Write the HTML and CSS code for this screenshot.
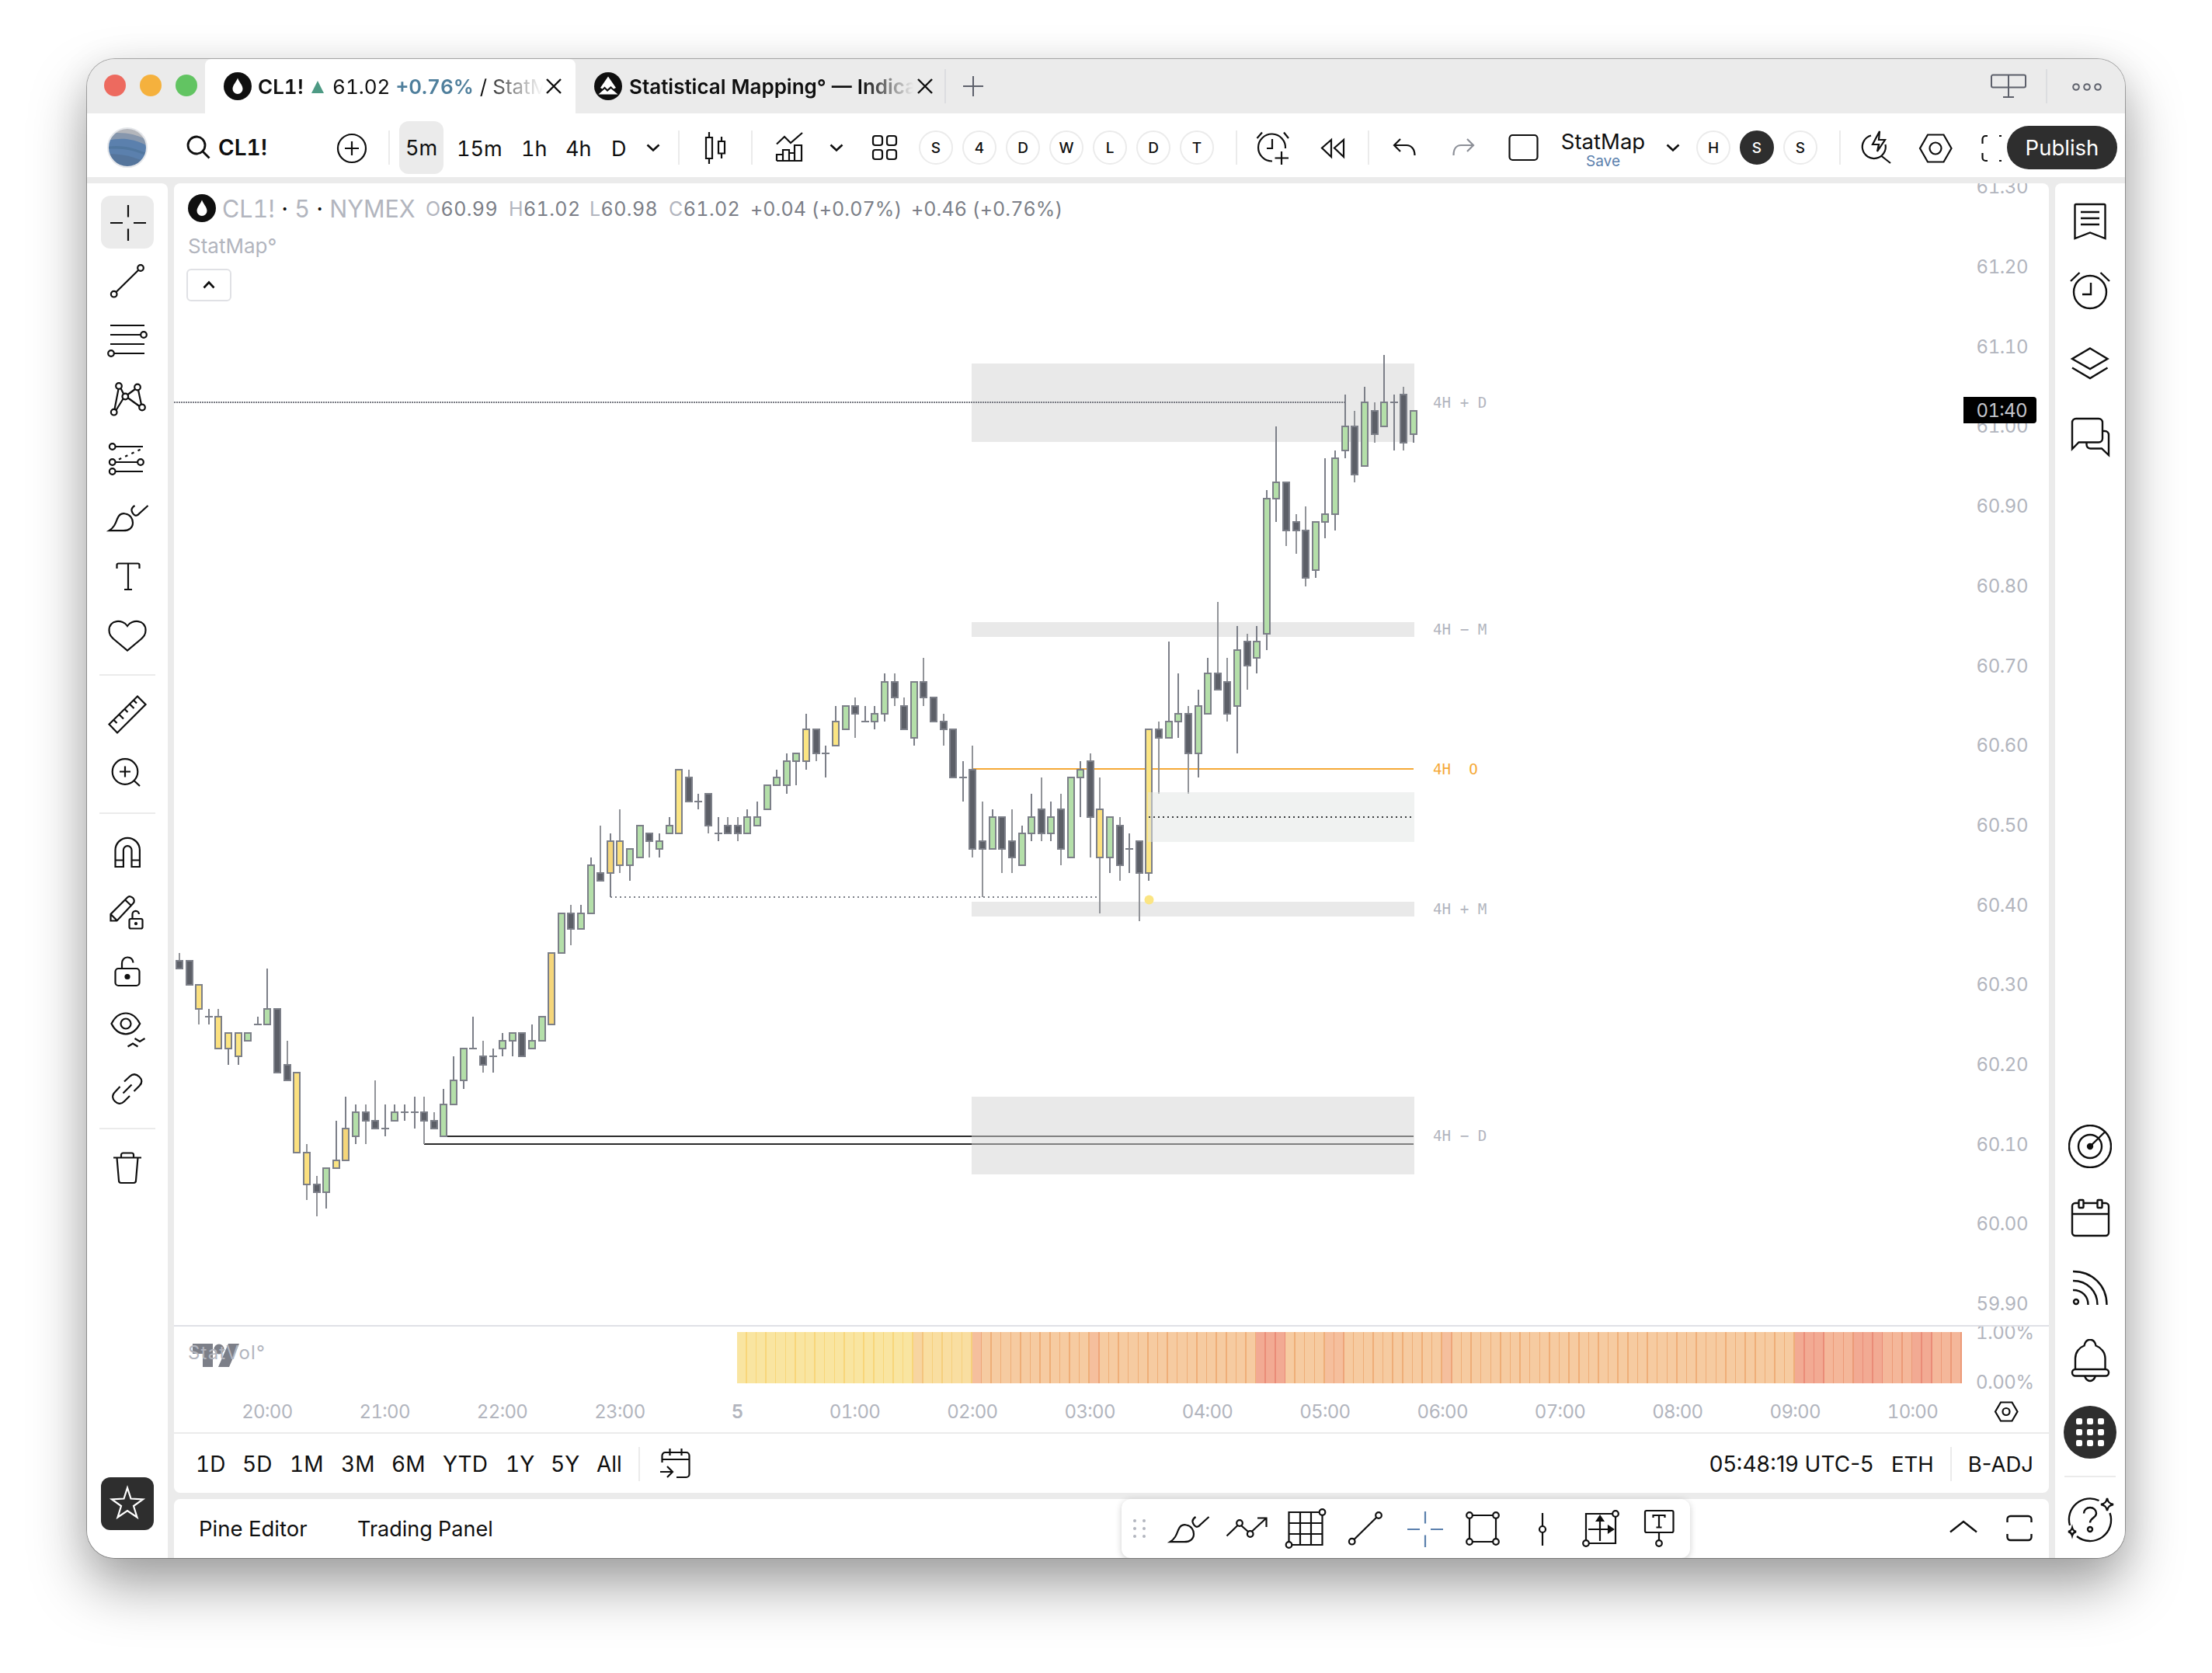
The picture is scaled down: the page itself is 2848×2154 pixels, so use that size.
FILE: index.html
```html
<!DOCTYPE html>
<html lang="en">
<head>
<meta charset="utf-8">
<title>CL1! 61.02 +0.76% / StatMap</title>
<link rel="stylesheet" href="styles.css">
</head>
<body>
<svg class="defs" width="0" height="0" aria-hidden="true">
  <defs>
    <symbol id="i-drop" viewBox="0 0 36 36"><circle cx="18" cy="18" r="18" fill="#0f0f0f"/><path d="M18 7.500C16 13 11.500 16.500 11.500 21.500a6.500 6.500 0 0 0 13 0C24.500 16.500 20 13 18 7.500z" fill="#fff"/></symbol>
    <symbol id="i-chev" viewBox="0 0 56 56"><path d="M20.500 24.500 28 31.500l7.500-7"/></symbol>
    <symbol id="i-close" viewBox="0 0 24 24"><path d="M3 3l18 18M21 3 3 21"/></symbol>
    <symbol id="i-cross" viewBox="0 0 56 56"><path d="M6 29h16M36 29h16M29 6v15.500M29 36.500V52"/></symbol>
    <symbol id="i-line" viewBox="0 0 56 56"><circle cx="10.700" cy="44.700" r="3.800"/><circle cx="45" cy="11" r="3.800"/><path d="M13.500 42 42.200 13.800"/></symbol>
    <symbol id="i-brush" viewBox="0 0 56 56"><path d="M4.500 45.200C11 41 12.500 36.500 15 30c2-5 6-7.500 10.500-6.500 6 1 9.500 6 9.500 11.500 0 6.500-5 10.200-12 10.200zM37.500 13c-3 2-4.500 4-4 6.500s3 6.300 5.500 6.300c2 0 3.500-1.500 4.500-2.800L54.500 13"/></symbol>
  </defs>
</svg>

<main class="window">
  <header class="tabs">
    <div class="lights"><i class="red"></i><i class="amber"></i><i class="green"></i></div>
    <div class="tab tab-on">
      <svg class="coin"><use href="#i-drop"/></svg>
      <div class="tab-title t1"><b>CL1!</b><svg class="tri" viewBox="0 0 16 16"><path d="M8 0l8 16H0z"/></svg><span class="px">61.02</span><span class="chg">+0.76%</span><span class="rest">/ StatMap</span></div>
      <svg class="x"><use href="#i-close"/></svg>
    </div>
    <div class="tab tab-off">
      <svg class="coin" viewBox="0 0 36 36"><circle cx="18" cy="18" r="18" fill="#0f0f0f"/><path d="M18 5.500 28 20l-3 1.500-3.500-3.500-4.500 4-3.500-3.500-3 3-2.500-1.500z" fill="#fff"/><path d="M5.500 28.500 13.500 21.500l3.500 3.500 4.500-4 9 7.500z" fill="#fff"/></svg>
      <div class="tab-title t2"><b>Statistical Mapping° — Indicator</b></div>
      <svg class="x"><use href="#i-close"/></svg>
    </div>
    <span class="tab-sep"></span>
    <svg class="tab-plus" viewBox="0 0 28 28"><path d="M14 1v26M1 14h26"/></svg>
    <svg class="tab-layout" viewBox="0 0 48 34"><path d="M2 4.500a2 2 0 0 1 2-2h40a2 2 0 0 1 2 2v12a2 2 0 0 1-2 2H4a2 2 0 0 1-2-2zM24 2.500v28M17 31h14"/></svg>
    <span class="tab-sep sep-r"></span>
    <svg class="tab-dots" viewBox="0 0 40 12"><circle cx="6" cy="6" r="3.800"/><circle cx="20" cy="6" r="3.800"/><circle cx="34" cy="6" r="3.800"/></svg>
  </header>

  <nav class="bar">
    <svg class="avatar" viewBox="0 0 52 52"><defs><clipPath id="av"><circle cx="26" cy="26" r="25"/></clipPath></defs><g clip-path="url(#av)"><rect width="52" height="52" fill="#5b80ad"/><path d="M0 0h52v17C38 9 20 6 0 10z" fill="#b4b6bb"/><path d="M0 8c18-3 38 0 52 9v7C34 14 18 13 0 17z" fill="#8797ad"/><path d="M0 25c20-3 36 2 52 9v3C34 29 18 26 0 28z" fill="#51779f"/><path d="M0 34c18 0 34 3 52 12v6H0z" fill="#55759c"/></g><circle cx="26" cy="26" r="25" fill="none" stroke="#e4e6ea" stroke-width="2"/></svg>
    <div class="search"><svg viewBox="0 0 32 32"><circle cx="13" cy="13" r="11"/><path d="M21 21l8.500 8.500"/></svg><b>CL1!</b></div>
    <svg class="ic" viewBox="0 0 56 56"><circle cx="28" cy="29" r="18"/><path d="M28 20v18M19 29h18"/></svg>
    <span class="sep"></span>
    <span class="tf tf-on">5m</span>
    <span class="tf">15m</span>
    <span class="tf">1h</span>
    <span class="tf">4h</span>
    <span class="tf">D</span>
    <svg class="ic bold"><use href="#i-chev"/></svg>
    <span class="sep"></span>
    <svg class="ic" viewBox="0 0 56 56"><path d="M16 15h8v27h-8zM20 8v7M20 42v7M32 20h8v15.500h-8zM36 14v6M36 35.500V42"/></svg>
    <span class="sep"></span>
    <svg class="ic" viewBox="0 0 56 56"><path d="M12 23.500 22 14l8 8 15-13M12 45V37h8v8M20 45V31h8v14M28 45V35h7v10M35 45V25h9v20zM12 45h32"/></svg>
    <svg class="ic bold"><use href="#i-chev"/></svg>
    <svg class="ic" viewBox="0 0 56 56"><rect x="13" y="13" width="12" height="12" rx="3"/><rect x="31" y="13" width="12" height="12" rx="3"/><rect x="13" y="31" width="12" height="12" rx="3"/><rect x="31" y="31" width="12" height="12" rx="3"/></svg>
    <span class="chip">S</span><span class="chip">4</span><span class="chip">D</span><span class="chip">W</span><span class="chip">L</span><span class="chip">D</span><span class="chip">T</span>
    <span class="sep"></span>
    <svg class="ic" viewBox="0 0 56 56"><path d="M27 45.500A17.500 17.500 0 1 1 44 29M27 17v12h-7M7.500 16 14 8.500M42 8.500l6 7.500M39 33v17M30.500 41.500H48"/></svg>
    <svg class="ic" viewBox="0 0 56 56"><path d="M26 18 14 28.500 26 40zM42 18 30 28.500 42 40z"/></svg>
    <span class="sep"></span>
    <svg class="ic" viewBox="0 0 56 56"><path d="M22 17l-8 8 8 8M14 25h16c6 0 10.500 5 10.500 13"/></svg>
    <svg class="ic dim" viewBox="0 0 56 56"><path d="M33 17l8 8-8 8M41 25H25c-6 0-9.500 5-9.500 13"/></svg>
    <svg class="ic" viewBox="0 0 56 56"><rect x="10.500" y="12" width="36" height="32" rx="4"/></svg>
    <span class="layout"><span>StatMap</span><small>Save</small></span>
    <svg class="ic bold"><use href="#i-chev"/></svg>
    <span class="chip">H</span><span class="chip chip-on">S</span><span class="chip">S</span>
    <span class="sep"></span>
    <svg class="ic" viewBox="0 0 56 56"><path d="M21 12.500A15 15 0 1 0 39.500 24M34 38.500 46 48M32 7l-9 17h8l-2 9 10-15h-8z"/></svg>
    <svg class="ic" viewBox="0 0 56 56"><path d="M18 11.500h20.500L48.500 29l-10 17.500H18L8 29z"/><circle cx="28" cy="29" r="7.500"/></svg>
    <svg class="ic" viewBox="0 0 56 56"><path d="M12.500 23v-6a4 4 0 0 1 4-4H19M12.500 35v6a4 4 0 0 0 4 4H19M34 13h3M34 45h3"/></svg>
    <span class="publish">Publish</span>
  </nav>

  <div class="body">
    <aside class="tools">
      <span class="tool tool-on"><svg><use href="#i-cross"/></svg></span>
      <span class="tool"><svg><use href="#i-line"/></svg></span>
      <span class="tool"><svg viewBox="0 0 56 56"><path d="M6 9h44M6 21h39M6 33h44M11 45h39"/><circle cx="49" cy="21" r="3.800"/><circle cx="7" cy="45" r="3.800"/></svg></span>
      <span class="tool"><svg viewBox="0 0 56 56"><path d="M16.500 15 11.500 41M19.500 14l3.500 7M28.500 22l9.500-7M42 16l4 19M29 26.500 43.500 37M13.500 42 22.500 27.500"/><circle cx="17" cy="11" r="3.800"/><circle cx="10.700" cy="44.700" r="3.800"/><circle cx="25.300" cy="24.500" r="3.800"/><circle cx="41" cy="12.500" r="3.800"/><circle cx="47" cy="38.500" r="3.800"/></svg></span>
      <span class="tool"><svg viewBox="0 0 56 56"><circle cx="8.700" cy="13" r="3.800"/><circle cx="8.700" cy="33" r="3.800"/><circle cx="8.700" cy="45" r="3.800"/><circle cx="45" cy="33" r="3.800"/><path d="M13 13h35M13 33h28M13 45h35"/><path d="M17 29.500 45 16.500" stroke-dasharray="3.500 5.500"/></svg></span>
      <span class="tool"><svg><use href="#i-brush"/></svg></span>
      <span class="tool"><svg viewBox="0 0 56 56"><path d="M14.500 18v-4.500a2 2 0 0 1 2-2h25a2 2 0 0 1 2 2V18M29 11.500V45M24 45h10"/></svg></span>
      <span class="tool"><svg viewBox="0 0 56 56"><path d="M28 16c-6-9-23.500-8.500-23.500 5.500C4.500 27 7 29.500 10 32.500L28 47.500l18-15c3-3 5.500-5.500 5.500-11C51.500 7.500 34 7 28 16z"/></svg></span>
      <i class="rule"></i>
      <span class="tool"><svg viewBox="0 0 56 56"><path d="M4.500 40.500 41 4.500 51.500 15 15 51.500zM10.500 35l4 4M17.500 28l5.500 5.500M24.500 21l4 4M31 14.500l5.500 5.500M36 9.500l4 4"/></svg></span>
      <span class="tool"><svg viewBox="0 0 56 56"><circle cx="25" cy="25.500" r="16.300"/><path d="M37 37.500l7 6.500M25 18.500v14M18 25.500h14"/></svg></span>
      <i class="rule"></i>
      <span class="tool"><svg viewBox="0 0 56 56"><path d="M12.500 46V24.500a15.700 15.700 0 0 1 31.400 0V46H33.500V24.500a5.300 5.300 0 0 0-10.600 0V46zM12.500 37.500h10.400M33.500 37.500h10.400"/></svg></span>
      <span class="tool"><svg viewBox="0 0 56 56"><path d="M6.500 39.500V31L28 9.500c2-2 5-1.500 7 .5s2.500 5 .5 7L14.500 39.500zM7 31.500l7.500 7.500M25 12.500l8 7.500"/><rect x="30.500" y="37" width="17" height="12.500" rx="2"/><path d="M34.500 37v-6a4.200 4.200 0 0 1 8.400 0"/><circle cx="39" cy="43.200" r="1"/></svg></span>
      <span class="tool"><svg viewBox="0 0 56 56"><rect x="12.500" y="25" width="31" height="22" rx="4"/><path d="M21 25v-6.500c0-4.500 3-8 7-8s7 2.500 7.500 7"/><circle cx="28" cy="35.500" r="2.500" fill="#0f0f0f"/></svg></span>
      <span class="tool"><svg viewBox="0 0 56 56"><path d="M7.500 20C11.500 12 18 6.500 26 6.500S40 12 44.200 20C40 28 34 33.300 26 33.300S11.500 28 7.500 20z"/><circle cx="26" cy="20" r="6.500"/><path d="M28.500 49.500l6.500-4 6.500 4M37.500 39l6.500 4 6.500-4"/></svg></span>
      <span class="tool"><svg viewBox="0 0 56 56"><path d="M24 18.500l7-6.500c5-4.500 9.500-2.500 12.500.5s4.500 7 0 11.500l-7 7M18.500 25l-6.500 7c-4.500 4.500-3 9 0 12s7.500 4.500 12 0l7-7M22.500 33.500 33.500 22.500"/></svg></span>
      <i class="rule"></i>
      <span class="tool"><svg viewBox="0 0 56 56"><path d="M10 14.500h36M20 14.500V11a2.500 2.500 0 0 1 2.500-2.500h11A2.500 2.500 0 0 1 36 11v3.500M14.500 14.500 17 44a3 3 0 0 0 3 3h16a3 3 0 0 0 3-3l2.500-29.500"/></svg></span>
      <span class="tool tool-fav"><svg viewBox="0 0 56 56"><path d="M28 7.500 32.500 21.500 48 22.500 36 31l4.500 14.500L28 37 15.500 45.500 20 31 8 22.500l15.500-1z"/></svg></span>
    </aside>

    <section class="centre">
      <div class="chart-card">
        <div class="plot">
          <svg id="chart" width="2414" height="1608" viewBox="0 0 2414 1608"></svg>
          <div class="legend">
            <svg class="coin"><use href="#i-drop"/></svg>
            <span class="sym">CL1! <i>·</i> 5 <i>·</i> NYMEX</span>
            <span class="v">
              <span><s>O</s>60.99</span><span><s>H</s>61.02</span><span><s>L</s>60.98</span><span><s>C</s>61.02</span><span class="delta">+0.04 (+0.07%)</span><span class="delta">+0.46 (+0.76%)</span>
            </span>
          </div>
          <div class="study">StatMap°</div>
          <div class="fold"><svg viewBox="0 0 20 20"><path d="M3.500 13.500l6.500-7 6.500 7"/></svg></div>
        </div>
        <div class="ranges">
          <div class="spans"><span>1D</span><span>5D</span><span>1M</span><span>3M</span><span>6M</span><span>YTD</span><span>1Y</span><span>5Y</span><span>All</span></div>
          <i class="vsep"></i>
          <svg class="goto" viewBox="0 0 40 40"><path d="M3.500 18V9a4 4 0 0 1 4-4h27a4 4 0 0 1 4 4v24a4 4 0 0 1-4 4H22M3.500 14h35M13.500 0v9M28.500 0v9M1 30h16M10 23l7 7-7 7"/></svg>
          <span class="clock">05:48:19 UTC-5</span><span class="eth">ETH</span><i class="vsep vsep-r"></i><span class="adj">B-ADJ</span>
        </div>
      </div>
      <div class="dock">
        <span class="pine">Pine Editor</span><span class="trade">Trading Panel</span>
        <svg class="up" viewBox="0 0 56 56"><path d="M11 32.500 28 19l17 13.500"/></svg>
        <svg class="max" viewBox="0 0 56 56"><path d="M12.500 20v-4a4 4 0 0 1 4-4h23a4 4 0 0 1 4 4v4M12.500 35v4a4 4 0 0 0 4 4h23a4 4 0 0 0 4-4v-4"/></svg>
        <div class="float">
          <svg class="grip" viewBox="0 0 20 28"><circle cx="4" cy="4" r="2"/><circle cx="16" cy="4" r="2"/><circle cx="4" cy="14" r="2"/><circle cx="16" cy="14" r="2"/><circle cx="4" cy="24" r="2"/><circle cx="16" cy="24" r="2"/></svg>
          <svg><use href="#i-brush"/></svg>
          <svg viewBox="0 0 56 56"><path d="M1.500 37.500 15.500 24M20.500 24.500l8.500 7.500M34 31.500 52.500 14.500M41 14.500h11.500V26"/><circle cx="18" cy="21" r="3.800"/><circle cx="31.700" cy="35" r="3.800"/></svg>
          <svg viewBox="0 0 56 56"><path d="M44 7H5.500v38M48.500 11v38H10M20 7v42M34 7v42M5.500 21h43M5.500 35h43"/><circle cx="48.500" cy="7" r="3.800"/><circle cx="5.500" cy="49" r="3.800"/></svg>
          <svg><use href="#i-line"/></svg>
          <svg class="blue"><use href="#i-cross"/></svg>
          <svg viewBox="0 0 56 56"><path d="M14 11h26M14 45h26M10 15v26M44 15v26"/><circle cx="10" cy="11" r="3.800"/><circle cx="44" cy="11" r="3.800"/><circle cx="10" cy="45" r="3.800"/><circle cx="44" cy="45" r="3.800"/></svg>
          <svg viewBox="0 0 56 56"><circle cx="28" cy="29" r="4"/><path d="M28 8v17M28 33v17"/></svg>
          <svg viewBox="0 0 56 56"><path d="M42 9H8v34M46 13v34H12M26 44V14M11 29h28"/><path d="M22 18l4-6 4 6zM37 25l6 4-6 4z" fill="#0f0f0f"/><circle cx="46" cy="9" r="3.800"/><circle cx="8" cy="47" r="3.800"/></svg>
          <svg viewBox="0 0 56 56"><rect x="8" y="5" width="36.500" height="28" rx="2"/><path d="M18.500 14v-3h15v3M26 11v15.500M22.500 26.500h7M26 33v10"/><circle cx="26" cy="47" r="3.800"/></svg>
        </div>
      </div>
    </section>

    <aside class="side">
      <svg viewBox="0 0 56 56"><path d="M8.500 50V7.500a1.500 1.500 0 0 1 1.500-1.500h36a1.500 1.500 0 0 1 1.500 1.500V50L28 42.500zM16 16h24M16 24h24M16 32h24"/></svg>
      <svg viewBox="0 0 56 56"><circle cx="28" cy="27" r="21"/><path d="M29 15v15H18M3 13 14.500 2M41.500 2 53 13"/></svg>
      <svg viewBox="0 0 56 56"><path d="M28 7.500 50.500 21 28 34 5 21zM5 32.500 28 46l22.500-13.500"/></svg>
      <svg viewBox="0 0 56 56"><path d="M5 45V11a5 5 0 0 1 5-5h29a5 5 0 0 1 5 5v20.500a5 5 0 0 1-5 5H13.500zM44 22h3a5 5 0 0 1 5 5v26l-9-8.500H28.500a5 5 0 0 1-5-5v-3"/></svg>
      <i class="grow"></i>
      <svg viewBox="0 0 56 56"><circle cx="28" cy="28" r="27"/><circle cx="28" cy="28" r="15"/><circle cx="28" cy="28" r="3" fill="#0f0f0f"/><path d="M28 28 47 9.500"/></svg>
      <svg viewBox="0 0 56 56"><path d="M13 9H9a4 4 0 0 0-4 4v34a4 4 0 0 0 4 4h39a4 4 0 0 0 4-4V13a4 4 0 0 0-4-4h-4M20 9h17M5 23h47"/><rect x="13.500" y="5" width="6" height="10" rx="1"/><rect x="37.500" y="5" width="6" height="10" rx="1"/></svg>
      <svg viewBox="0 0 56 56"><circle cx="10" cy="44" r="3"/><path d="M6 29c12 0 19.500 8 19.500 19M6 17c19 0 31.500 14 31.500 31M6 5c25 0 43.500 18 43.500 43"/></svg>
      <svg viewBox="0 0 56 56"><path d="M9 39V25c0-8 5-14 11.500-16.500C21.500 4 24 .8 28 .8S34.500 4 35.500 8.500C42 11 47.500 17 47.500 25v14"/><rect x="5" y="39" width="47" height="8.500" rx="4"/><path d="M21 47.500c1.500 4.500 4 6.500 7 6.500s5.500-2 7-6.500"/></svg>
      <svg class="apps" viewBox="0 0 68 68"><circle cx="34" cy="34" r="34"/><g><rect x="16" y="16" width="8" height="8" rx="2"/><rect x="30" y="16" width="8" height="8" rx="2"/><rect x="44" y="16" width="8" height="8" rx="2"/><rect x="16" y="30" width="8" height="8" rx="2"/><rect x="30" y="30" width="8" height="8" rx="2"/><rect x="44" y="30" width="8" height="8" rx="2"/><rect x="16" y="44" width="8" height="8" rx="2"/><rect x="30" y="44" width="8" height="8" rx="2"/><rect x="44" y="44" width="8" height="8" rx="2"/></g></svg>
      <i class="rule"></i>
      <svg viewBox="-4 -4 64 64" class="help"><path d="M39.500 3A27 27 0 0 0 2 35M53.500 19A27 27 0 0 1 11 49"/><path d="M20 19.500c0-4.500 3.500-7.500 8-7.500s8 3 8 7.500c0 6-8 5.500-8 12"/><circle cx="28" cy="40" r="3"/><path d="M50 0c1 5 3 7 8 8-5 1-7 3-8 8-1-5-3-7-8-8 5-1 7-3 8-8zM5 38c.8 3 2 4.300 5 5-3 .8-4.200 2-5 5-.8-3-2-4.200-5-5 3-.7 4.200-2 5-5z"/></svg>
    </aside>
  </div>
</main>
<script src="chart.js"></script>
</body>
</html>
```

FILE: styles.css
```css
* { box-sizing: border-box; }

body {
  margin: 0;
  width: 2848px;
  height: 2154px;
  padding: 76px 112px 0;
  overflow: hidden;
  background: #fff;
  color: #0f0f0f;
  font-family: Inter, "Liberation Sans", sans-serif;
  font-size: 26px;
  font-variant-numeric: tabular-nums;
}

svg { display: block; fill: none; stroke: currentColor; stroke-width: 2; flex: none; }
.defs { position: absolute; }
i, s { font-style: normal; text-decoration: none; }

.window {
  display: flex;
  flex-direction: column;
  width: 2624px;
  height: 1930px;
  border-radius: 36px;
  overflow: hidden;
  background: #ebebeb;
  box-shadow: 0 0 0 1px rgba(0, 0, 0, .3), 0 36px 72px rgba(0, 0, 0, .36), 0 6px 48px rgba(0, 0, 0, .08);
}

/* tab strip */
.tabs { display: flex; align-items: center; height: 70px; flex: none; background: #ebebeb; color: #0f0f0f; }
.lights { display: flex; gap: 18px; width: 152px; padding-left: 22px; margin-top: -2px; }
.lights i { width: 28px; height: 28px; border-radius: 50%; }
.red { background: #ed6a5f; }
.amber { background: #f5b13d; }
.green { background: #62c462; }
.tab { display: flex; align-items: center; height: 70px; width: 477px; padding-left: 24px; }
.tab-on { background: #fff; border-radius: 8px 8px 0 0; }
.coin { width: 36px; height: 36px; stroke: none; }
.tab-title { display: flex; align-items: center; white-space: nowrap; overflow: hidden; height: 70px; }
.tab-title b { font-weight: 600; }
.t1 { width: 371px; margin-left: 8px; -webkit-mask-image: linear-gradient(90deg, #000 78%, transparent 99%); mask-image: linear-gradient(90deg, #000 78%, transparent 99%); }
.tri { width: 16px; height: 16px; margin: 2px 11px 0 10px; fill: #4d9a84; stroke: none; }
.chg { margin: 0 8px 0 7px; font-weight: 600; color: #4f7f9c; }
.t2 { width: 370px; margin-left: 9px; -webkit-mask-image: linear-gradient(90deg, #000 81%, transparent 99%); mask-image: linear-gradient(90deg, #000 81%, transparent 99%); }
.x { width: 24px; height: 24px; stroke-width: 2.400; margin-left: -2px; }
.tab-off { width: 475px; }
.tab-off .x { margin-left: -1px; }
.tab-sep { width: 2px; height: 44px; background: #dcdde0; }
.tab-plus { width: 28px; height: 28px; margin-left: 21px; stroke: #5d606b; }
.tab-layout { width: 48px; height: 34px; margin-left: auto; stroke: #5d606b; }
.sep-r { margin-left: 24px; }
.tab-dots { width: 40px; height: 12px; margin: 2px 29px 0 31px; stroke: #5d606b; }

/* main toolbar: one track per control */
.bar {
  display: grid;
  grid-template-columns: 102px 185px 75px 14px 74px 83px 57px 59px 26px 60px 20px 74px 21px 61px 62px 72px repeat(6, 56px) 72px 20px 77px 73px 20px 75px 77px 77px 116px 58px 56px 56px 72px 20px 76px 76px 44px 142px;
  align-items: center;
  height: 82px;
  flex: none;
  padding: 6px 0 0 26px;
  background: #fff;
  font-size: 27px;
}
.avatar { width: 52px; height: 52px; stroke: none; }
.search { display: flex; align-items: center; gap: 9px; font-size: 28px; }
.search svg { width: 32px; height: 32px; stroke-width: 2.800; }
.search b { font-weight: 600; }
.ic { width: 56px; height: 56px; stroke-width: 2.200; }
.bold { stroke-width: 2.600; }
.dim { color: #8c8f97; }
.sep { width: 2px; height: 44px; background: #ebebeb; }
.tf { margin-top: 2px; white-space: nowrap; }
.tf-on { width: 57px; height: 68px; margin-top: 0; line-height: 70px; border-radius: 12px; background: #ebebeb; text-align: center; }
.chip { width: 44px; height: 44px; line-height: 41px; border: 2px solid #ebebeb; border-radius: 50%; text-align: center; font-size: 19px; font-weight: 500; }
.chip-on { background: #2e2e2e; border-color: #2e2e2e; color: #fff; }
.layout { width: 108px; padding-top: 5px; text-align: center; line-height: 30px; font-size: 27.500px; }
.layout span, .layout small { display: block; }
.layout span { margin: 0 -4px; }
.layout small { font-size: 19px; line-height: 22px; color: #5b80ad; }
.publish { height: 56px; line-height: 57px; border-radius: 28px; background: #2e2e2e; color: #fff; text-align: center; font-size: 27.500px; }

.body { display: flex; gap: 8px; flex: 1; padding-top: 8px; }

/* drawing tools */
.tools { display: flex; flex-direction: column; align-items: center; gap: 8px; width: 104px; padding-top: 16px; background: #fff; border-radius: 0 8px 0 0; }
.tool { display: flex; align-items: center; justify-content: center; width: 68px; height: 68px; flex: none; border-radius: 12px; }
.tool svg { width: 56px; height: 56px; stroke-width: 2.200; }
.tool-on { background: #ebebeb; }
.tool-fav { margin: auto 0 36px; background: #2e2e2e; color: #fff; }
.rule { width: 72px; height: 2px; margin: 8px 0; background: #ebebeb; flex: none; }

.centre { display: flex; flex-direction: column; gap: 8px; width: 2414px; }
.chart-card { display: flex; flex-direction: column; height: 1686px; background: #fff; border-radius: 8px; overflow: hidden; }
.plot { position: relative; height: 1610px; flex: none; border-bottom: 2px solid #ebebeb; }
#chart { stroke: none; }
#chart text { font-size: 24px; fill: #b2b5be; }
#chart .lvl { font: 19.200px "DejaVu Sans Mono", monospace; white-space: pre; }
#chart .lvl-o { fill: #f5a937; }
.legend { position: absolute; left: 18px; top: 12px; display: flex; align-items: center; height: 40px; color: #7c7f88; white-space: nowrap; }
.sym { width: 262px; margin-left: 8px; font-size: 30.500px; color: #b2b5be; }
.sym i { color: #0f0f0f; }
.v { display: grid; grid-template-columns: 107px 104px 102px 105px 207px auto; padding-top: 2px; font-size: 25px; letter-spacing: .4px; }
.v s { color: #b2b5be; }
.delta { letter-spacing: .1px; }
.study { position: absolute; left: 18px; top: 65px; line-height: 32px; color: #b2b5be; font-size: 26px; }
.fold { position: absolute; left: 16px; top: 110px; display: flex; align-items: center; justify-content: center; width: 58px; height: 42px; border: 2px solid #e0e1e5; border-radius: 6px; background: #fff; }
.fold svg { width: 20px; height: 20px; stroke-width: 2.600; }

.ranges { display: flex; align-items: center; height: 76px; padding: 1px 20px 0 28px; font-size: 28px; white-space: nowrap; }
.spans { display: grid; grid-template-columns: 60px 61px 66px 65px 66px 81px 58px 59px 54px; }
.vsep { width: 2px; height: 44px; background: #ebebeb; }
.goto { width: 40px; height: 40px; margin-left: 25px; stroke-width: 2.200; }
.clock, .eth, .adj { font-variant-numeric: normal; font-size: 27.500px; }
.clock { margin-left: auto; font-size: 28px; }
.eth { margin-left: 23px; }
.vsep-r { margin: 0 21px; }

.dock { position: relative; display: flex; align-items: center; height: 76px; padding: 0 10px 0 32px; background: #fff; border-radius: 8px 8px 0 0; font-size: 27px; }
.pine { width: 204px; font-size: 27.500px; }
.up { width: 56px; height: 56px; margin-left: auto; stroke-width: 2.400; }
.max { width: 56px; height: 56px; margin-left: 16px; stroke-width: 2.400; }
.float { position: absolute; left: 1220px; top: 0; display: flex; align-items: center; gap: 20px; width: 732px; height: 76px; padding-left: 13px; border-radius: 12px; background: #fff; box-shadow: 0 2px 8px rgba(0, 0, 0, .2); }
.float svg { width: 56px; height: 56px; stroke-width: 2.200; }
.float .grip { width: 20px; height: 28px; margin-right: 5px; fill: #b2b5be; stroke: none; }
.float .blue { color: #5b80ad; }

/* widget bar */
.side { display: flex; flex-direction: column; align-items: center; width: 90px; padding-top: 21px; background: #fff; border-radius: 8px 0 0 0; }
.side svg { width: 56px; height: 56px; margin-bottom: 36px; stroke-width: 2.400; }
.side .grow { flex: 1; }
.side .apps { width: 68px; height: 68px; margin: -6px 0 22px; fill: #2e2e2e; stroke: none; }
.apps g { fill: #fff; }
.side .rule { width: 66px; margin: 0 0 23px; }
.side .help { width: 64px; height: 64px; margin-bottom: 17px; }
```

FILE: chart.js
```javascript
// Five-minute candles in ticks above 60.00: type, body top, body bottom, high, low.
// g rising, d falling, t doji; y/o highlighted with the rising wick, Y with the falling wick.
const candles = `
d33,32,34,32 d33,30,33,30 Y30,27,30,25 t26,26,27,25 Y26,22,27,22 y24,22,24,20 y24,21,24,20 g24,23,24,23
t25,25,26,25 g27,25,32,25 d27,19,27,19 d20,18,23,18 Y19,9,19,9 Y9,5,10,3 d5,4,6,1 g7,4,7,2 y8,7,13,7
o12,8,16,8 g14,11,15,10 d14,13,15,10 d13,12,18,12 t12,12,15,11 g14,13,15,13 t14,14,15,13 t14,14,16,12
d14,13,16,10 d13,12,14,12 g15,11,17,11 g18,15,21,15 g22,18,22,17 t22,22,26,22 d21,20,23,19 t21,21,22,19
g23,22,24,21 g24,23,24,21 d24,21,24,21 g23,22,25,22 g26,23,26,23 o34,25,34,25 g39,34,39,34 d39,37,40,35
g39,37,40,37 g45,39,46,39 d44,43,50,43 o48,44,49,41 Y48,45,52,44 g47,45,47,43 g50,46,50,46 d49,48,49,46
g48,47,49,46 g50,49,51,49 y57,49,57,49 d56,53,57,53 t53,53,54,52 d54,50,54,49 t49,49,51,48 d50,49,51,49
d50,49,51,48 g51,49,52,49 g51,50,53,50 g55,52,55,52 g56,55,57,55 g58,55,59,54 g59,58,59,55 y62,58,64,57
d62,59,62,58 t59,59,60,56 y63,60,65,60 g65,62,65,62 d65,64,66,61 t63,63,65,63 g64,63,65,62 g68,64,69,63
d68,66,69,65 d65,62,66,62 g68,61,68,60 d68,66,71,65 d66,63,66,63 d63,62,64,60 d62,56,62,56 t56,56,58,53
d57,47,60,46 d48,47,53,41 g51,47,52,47 d51,47,51,44 d48,46,52,44 g49,45,50,45 g51,49,54,48 d52,49,56,48
g51,49,53,48 d52,47,54,45 g56,46,56,46 g57,56,58,51 d58,51,59,46 Y52,46,56,39 g51,46,51,44 d50,45,51,43
t47,47,49,44 d48,44,48,38 y62,44,62,43 d62,61,63,54 g63,61,73,61 g64,63,69,61 d64,59,65,54 g65,59,67,56
g69,64,71,64 d69,67,78,67 d68,64,71,63 g72,65,75,59 d73,70,74,67 g73,71,75,69 g91,74,92,72 g93,91,100,88
d93,87,93,85 d88,87,89,84 d87,81,90,80 g88,82,88,81 g89,88,96,86 g96,89,97,87 g100,97,104,96 d100,94,102,93
g103,95,105,95 d102,99,103,98 g103,100,109,100 t103,103,104,97 d104,98,105,97 g102,99,102,98`.trim().split(/\s+/);

const fills = { g: '#b4dfa9', d: '#5c5f67', t: '#7c7f88', y: '#fbe583', Y: '#fbe07f', o: '#f5d67a' };
const svg = document.getElementById('chart');
const X = i => Math.round(7 + 12.611 * i);
const Y = t => 1340.1 - 10.27 * t;
const rect = (x, y, w, h, fill, extra = '') => `<rect x="${x}" y="${y}" width="${w}" height="${h}" fill="${fill}" ${extra}/>`;
const line = (x1, x2, y, color, dash = '') => `<path d="M${x1} ${y}H${x2}" stroke="${color}" stroke-width="2" ${dash && `stroke-dasharray="${dash}"`}/>`;
const label = (x, y, w, s, extra = '') => `<text x="${x}" y="${y}" textLength="${w}" ${extra}>${s}</text>`;

// levels and zones
let out = line(352, 1596, 1227, '#2b2b2b') + line(322, 1596, 1237, '#2b2b2b');
out += line(562, 1190, 919, '#7c7f88', '2 4');
out += [[232, 101], [565, 19], [925, 19], [1176, 100]].map(([y, h]) => rect(1027, y, 570, h, '#d4d4d4', 'fill-opacity=".5"')).join('');
out += line(0, 1507, 282, '#787a82', '2 1') + line(1027, 1596, 754, '#f5a937');

// candles
candles.forEach((c, i) => {
  const k = c[0], [top, bot, hi, lo] = c.slice(1).split(',').map(Number), x = X(i);
  const wick = k === 'd' || k === 'Y' ? '#929499' : '#7c7f88';
  const y1 = Math.round(Y(top) - 1), y2 = Math.round(Y(bot) + 1), h1 = Math.round(Y(hi)), l1 = Math.round(Y(lo));
  if (hi > top) out += rect(x - 1, h1, 2, y1 - h1, wick);
  if (lo < bot) out += rect(x - 1, y2, 2, l1 - y2, wick);
  out += rect(x - 5, y1, 10, y2 - y1, '#7c7f88');
  if (k !== 't') out += rect(x - 3, y1 + 2, 6, y2 - y1 - 4, fills[k]);
});
out += rect(1254, 784, 343, 64, '#e1e6e3', 'fill-opacity=".5"') + line(1255, 1596, 816, '#3a3d3f', '2 4');
out += '<circle cx="1255.500" cy="922.500" r="6" fill="#fbe583"/>';
out += [['4H + D', 282], ['4H − M', 574], ['4H + M', 934], ['4H − D', 1226]].map(([s, y]) => `<text class="lvl" x="1621" y="${y + 7}">${s}</text>`).join('');
out += '<text class="lvl lvl-o" x="1621" y="761">4H  O</text>';

// price axis
for (let p = 130; p >= -10; p -= 10) out += label(2320.500, (Y(p) + 8.300).toFixed(1), 67, (60 + p / 100).toFixed(2));
out += '<path d="M2304 275h90a4 4 0 0 1 4 4v26a4 4 0 0 1-4 4h-90z" fill="#000"/>' + label(2320.500, 300.500, 66, '01:40', 'style="fill:#c3c5cc"');

// lower pane
out += rect(0, 1470, 2414, 138, '#fff') + rect(0, 1470, 2414, 2, '#e0e1e6');
const hot = [53, 54, 55, 108, 109, 110, 114, 115, 116, 120, 121];
const warm = [24, 36, 60, 61, 72];
const shade = j => j < 18 ? ['#f9e5a1', '#f8d67a'] : j === 18 ? ['#f7d5a1', '#f4c57e'] : j < 24 ? ['#f9dea1', '#f6cf7c']
  : hot.includes(j) ? ['#f2aa93', '#ea8c78']
  : warm.includes(j) ? ['#f5bf9d', '#eea57a']
  : j >= 111 ? ['#f4b79a', '#ec9a78'] : ['#f6cba1', '#efae78'];
for (let j = 0; j < 125; j++) {
  const a = Math.round(725 + 12.611 * j), b = Math.round(725.500 + 12.611 * (j + 1)), [f, e] = shade(j);
  out += rect(a, 1479, b - a, 66, f) + rect(b - 2, 1479, 2, 66, e);
}
out += '<clipPath id="vp"><path d="M0 1472h2414v136H0z"/></clipPath><g clip-path="url(#vp)">' + label(2320, 1488, 75, '1.00%') + label(2320, 1552, 75, '0.00%') + '</g>';
out += '<path d="M24 1494h26v30H37v-17H24zM70 1494h14l-13 30H57z" fill="#7c7f88"/><circle cx="58" cy="1501" r="6.500" fill="#7c7f88"/>';
out += label(18, 1513.500, 99, 'StatVol°');

// time axis
['20', '21', '22', '23', '', '01', '02', '03', '04', '05', '06', '07', '08', '09', '10'].forEach((h, n) => {
  const x = 120.200 + 151.330 * n;
  out += h ? label(x - 33, 1590, 66, h + ':00') : `<text x="${x}" y="1590" text-anchor="middle" font-weight="600">5</text>`;
});
out += '<g fill="none" stroke="#0f0f0f" stroke-width="2.200"><path d="M2352 1569.500h14.500l7 12-7 12H2352l-7-12z"/><circle cx="2359" cy="1581.500" r="4.500"/></g>';
svg.innerHTML = out;
```
